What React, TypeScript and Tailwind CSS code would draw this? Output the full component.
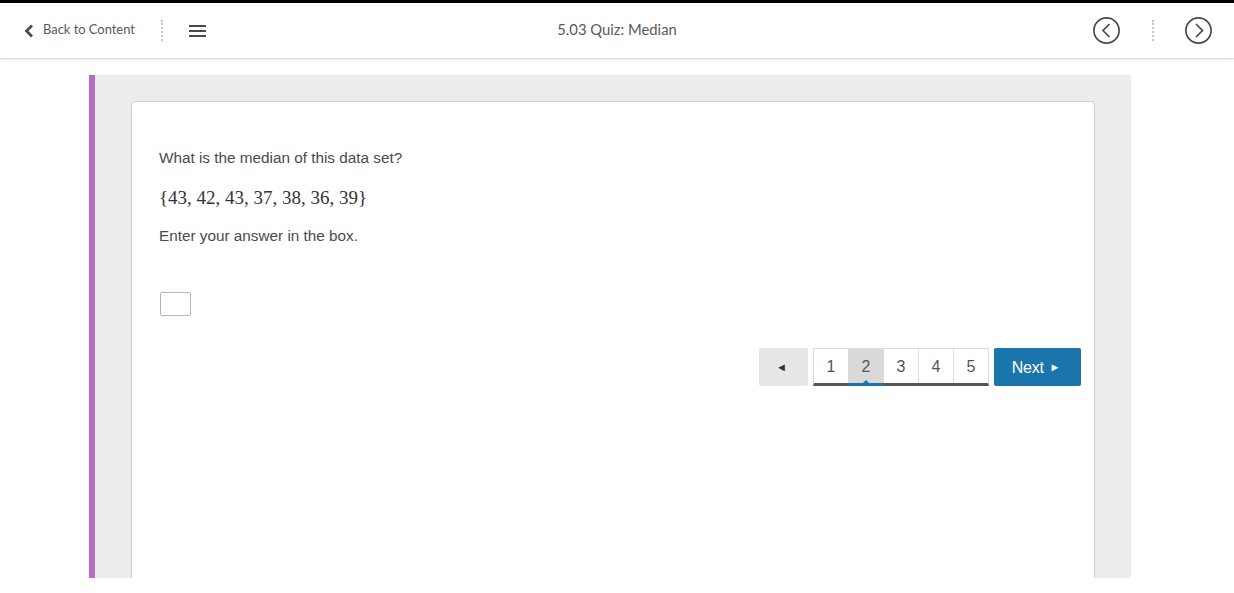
const pages = [1, 2, 3, 4, 5];

const DottedDivider = () => (
    <div className="h-[21px] w-0 border-l-2 border-dotted border-[#c4c4c4]"></div>
);

const CircleArrow = ({ dir }: { dir: 'left' | 'right' }) => (
    <svg width="28" height="28" viewBox="0 0 28 28" fill="none" stroke="#4a4a4a">
        <circle cx="13.500" cy="13.500" r="12.600" strokeWidth="1.700" />
        <path d={dir === 'left' ? 'M16.500 7 10 13.500l6.500 6.500' : 'M11 7l6.500 6.500L11 20'} strokeWidth="1.700" />
    </svg>
);

export default function App() {
    return (
        <div className="h-[593px] w-[1234px] overflow-hidden bg-white font-['Liberation_Sans',Arial,sans-serif]">
            <header className="flex h-[59px] items-center border-t-[3px] border-b border-black border-b-[#dedede] bg-white shadow-[0_1px_4px_rgba(0,0,0,0.1)] font-['Lato',sans-serif] text-[#565a5c]">
                <div className="flex w-[420px] items-center pl-[24px]">
                    <svg width="10" height="14" viewBox="0 0 10 14" fill="none" stroke="#494c4e" strokeWidth="2.700">
                        <path d="M8 1.500 2.500 7 8 12.500" />
                    </svg>
                    <span className="-mt-[2px] ml-[9px] text-[12.900px]">Back to Content</span>
                    <div className="ml-[26px]"><DottedDivider /></div>
                    <div className="ml-[26px] flex w-[17px] flex-col gap-[3px]">
                        <div className="h-[2px] bg-[#494c4e]"></div>
                        <div className="h-[2px] bg-[#494c4e]"></div>
                        <div className="h-[2px] bg-[#494c4e]"></div>
                    </div>
                </div>
                <div className="-mt-[2px] w-[394px] text-center text-[14.800px]">5.03 Quiz: Median</div>
                <div className="flex flex-1 items-center pl-[279px]">
                    <CircleArrow dir="left" />
                    <div className="ml-[31px] mr-[31px]"><DottedDivider /></div>
                    <CircleArrow dir="right" />
                </div>
            </header>

            <main className="mt-[16px] ml-[89px] h-[503px] w-[1042px] border-l-[6px] border-[#b56cc6] bg-[#ededed] pt-[26px] pl-[36px]">
                <section className="h-[477px] w-[964px] rounded-t-[4px] border border-b-0 border-[#cdcdcd] bg-white pt-[47px] pl-[27px] text-[#4a4a4a]">
                    <p className="text-[15.300px] leading-[18px]">What is the median of this data set?</p>
                    <p className="mt-[19px] font-['Liberation_Serif',serif] text-[19px] leading-[24px] text-[#333]">
                        {'{43, 42, 43, 37, 38, 36, 39}'}
                    </p>
                    <p className="mt-[17px] text-[15.300px] leading-[18px]">Enter your answer in the box.</p>
                    <input
                        type="text"
                        aria-label="Answer"
                        className="mt-[47px] ml-[1px] block h-[24px] w-[31px] rounded-[2px] border border-[#b5b5b5] bg-white"
                    />
                    <nav className="mt-[32px] flex items-stretch pl-[600px]">
                        <button className="flex h-[38px] w-[49px] items-center justify-center rounded-[2px] bg-[#e6e6e6] pr-[4px] text-[11px] text-[#333]">
                            ◄
                        </button>
                        <div className="ml-[5px] flex h-[38px] w-[176px] border-x border-t border-[#dcdcdc] border-b-[3px] border-b-[#565656] bg-white">
                            {pages.map((p) => (
                                <div
                                    key={p}
                                    className={`relative flex flex-1 items-center justify-center border-r border-[#dcdcdc] pt-[2px] text-[16px] text-[#555] last:border-r-0 ${
                                        p === 2 ? 'bg-[#d9d9d9]' : ''
                                    }`}
                                >
                                    {p}
                                    {p === 2 && (
                                        <>
                                            <span className="absolute right-0 -bottom-[3px] left-0 h-[3px] bg-[#1b75ad]"></span>
                                            <span className="absolute -bottom-[1px] left-1/2 h-0 w-0 -translate-x-1/2 border-x-[4px] border-b-[4px] border-x-transparent border-b-[#1b75ad]"></span>
                                        </>
                                    )}
                                </div>
                            ))}
                        </div>
                        <button className="ml-[5px] flex h-[38px] w-[87px] items-center justify-center gap-[6px] rounded-[2px] bg-[#1b75ad] pt-[1px] pr-[3px] text-[16px] tracking-[-0.3px] text-white">
                            Next <span className="text-[11px]">►</span>
                        </button>
                    </nav>
                </section>
            </main>
        </div>
    );
}
